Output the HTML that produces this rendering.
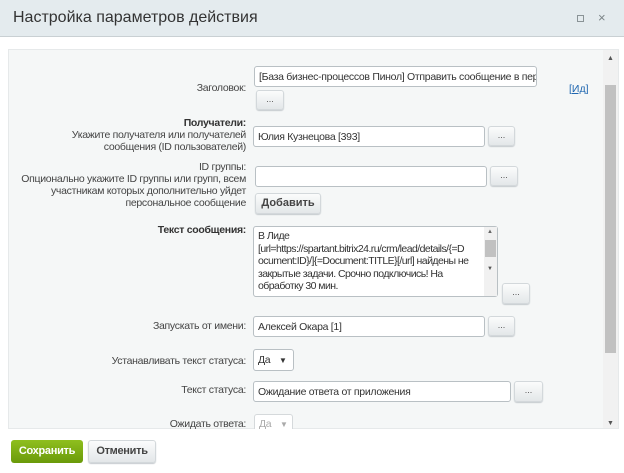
<!DOCTYPE html>
<html><head><meta charset="utf-8"><style>
*{box-sizing:border-box;margin:0;padding:0}
body{width:624px;height:473px;background:#fff;font-family:"Liberation Sans",sans-serif;position:relative;overflow:hidden;font-size:11px;color:#333}
.a{position:absolute}
.hdr{left:0;top:0;width:624px;height:37px;background:#e4ebee;border-bottom:1px solid #c9d0d3}
.title{left:13px;top:9px;font-size:16px;color:#333}
.panel{left:8px;top:49px;width:611px;height:380px;background:#f5f7f7;border:1px solid #e6e9ea}
.lbl{text-align:right;font-size:10.5px;color:#444;line-height:12px;letter-spacing:-0.3px}
.in{background:#fff;border:1px solid #b9c0c4;border-radius:3px;font-size:10.5px;padding:4px 4px;white-space:nowrap;overflow:hidden;color:#333;letter-spacing:-0.3px}
.btn{background:linear-gradient(#fbfcfc,#e3e7e9);border:1px solid #d3d8db;border-radius:3px;box-shadow:0 1px 1px #c5cace;text-align:center;font-size:9px;color:#555;line-height:16px}
b{font-weight:bold;color:#333}
</style></head><body>
<div class="a hdr"></div>
<div class="a title">Настройка параметров действия</div>
<div class="a" style="left:577px;top:15px;width:7px;height:7px;border:1px solid #8a9396"></div>
<div class="a" style="left:598px;top:10px;font-size:13px;color:#7b8487">×</div>
<div class="a panel"></div>
<div class="a" style="left:603px;top:50px;width:15px;height:378px;background:#f1f1f1"></div>
<div class="a" style="left:605px;top:85px;width:11px;height:268px;background:#c1c1c1"></div>
<div class="a" style="left:607px;top:55px;font-size:7px;color:#555">▲</div>
<div class="a" style="left:607px;top:420px;font-size:7px;color:#555">▼</div>

<div class="a lbl" style="left:60px;width:186px;top:82px">Заголовок:</div>
<div class="a in" style="left:254px;top:66px;width:283px;height:21px">[База бизнес-процессов Пинол] Отправить сообщение в пер</div>
<div class="a btn" style="left:256px;top:90px;width:28px;height:20px">...</div>
<div class="a" style="left:569px;top:83px;font-size:10.5px;color:#2067b0">[<u>Ид</u>]</div>

<div class="a lbl" style="left:40px;width:206px;top:117px"><b>Получатели:</b><br>Укажите получателя или получателей<br>сообщения (ID пользователей)</div>
<div class="a in" style="left:253px;top:126px;width:232px;height:21px">Юлия Кузнецова [393]</div>
<div class="a btn" style="left:488px;top:126px;width:27px;height:20px">...</div>

<div class="a lbl" style="left:10px;width:236px;top:161px">ID группы:<br>Опционально укажите ID группы или групп, всем<br>участникам которых дополнительно уйдет<br>персональное сообщение</div>
<div class="a in" style="left:255px;top:166px;width:232px;height:21px"></div>
<div class="a btn" style="left:490px;top:166px;width:28px;height:20px">...</div>
<div class="a btn" style="left:255px;top:193px;width:66px;height:21px;font-size:11px;font-weight:bold;line-height:19px;color:#444">Добавить</div>

<div class="a lbl" style="left:60px;width:186px;top:224px"><b>Текст сообщения:</b></div>
<div class="a in" style="left:253px;top:226px;width:245px;height:71px;line-height:12.5px;padding:3px 4px;font-size:10.5px;letter-spacing:-0.55px">В Лиде<br>[url=https://spartant.bitrix24.ru/crm/lead/details/{=D<br>ocument:ID}/]{=Document:TITLE}[/url] найдены не<br>закрытые задачи. Срочно подключись! На<br>обработку 30 мин.</div>
<div class="a" style="left:484px;top:227px;width:13px;height:69px;background:#f1f1f1"></div>
<div class="a" style="left:485px;top:240px;width:11px;height:17px;background:#c1c1c1"></div>
<div class="a" style="left:487px;top:229px;font-size:6px;color:#666">▲</div>
<div class="a" style="left:487px;top:266px;font-size:6px;color:#555">▼</div>
<div class="a btn" style="left:502px;top:283px;width:28px;height:21px">...</div>

<div class="a lbl" style="left:60px;width:186px;top:320px">Запускать от имени:</div>
<div class="a in" style="left:253px;top:316px;width:232px;height:21px">Алексей Окара [1]</div>
<div class="a btn" style="left:488px;top:316px;width:27px;height:20px">...</div>

<div class="a lbl" style="left:40px;width:206px;top:355px">Устанавливать текст статуса:</div>
<div class="a in" style="left:253px;top:349px;width:41px;height:22px">Да <span style="font-size:8px;margin-left:6px">▼</span></div>

<div class="a lbl" style="left:60px;width:186px;top:384px">Текст статуса:</div>
<div class="a in" style="left:253px;top:381px;width:258px;height:21px">Ожидание ответа от приложения</div>
<div class="a btn" style="left:514px;top:381px;width:29px;height:21px">...</div>

<div class="a lbl" style="left:60px;width:186px;top:418px">Ожидать ответа:</div>
<div class="a in" style="left:254px;top:414px;width:39px;height:15px;color:#aaa;border-color:#d5d9db;border-bottom:none;border-radius:3px 3px 0 0;padding-top:3px">Да <span style="font-size:8px;margin-left:6px">▼</span></div>

<div class="a" style="left:11px;top:440px;width:72px;height:23px;background:linear-gradient(#8fbf1e,#6a9a0a);border-radius:3px;color:#fff;font-weight:bold;font-size:11px;text-align:center;line-height:23px;letter-spacing:-0.3px">Сохранить</div>
<div class="a btn" style="left:88px;top:440px;width:68px;height:23px;font-size:11px;font-weight:bold;line-height:21px;color:#444;letter-spacing:-0.3px">Отменить</div>
</body></html>
